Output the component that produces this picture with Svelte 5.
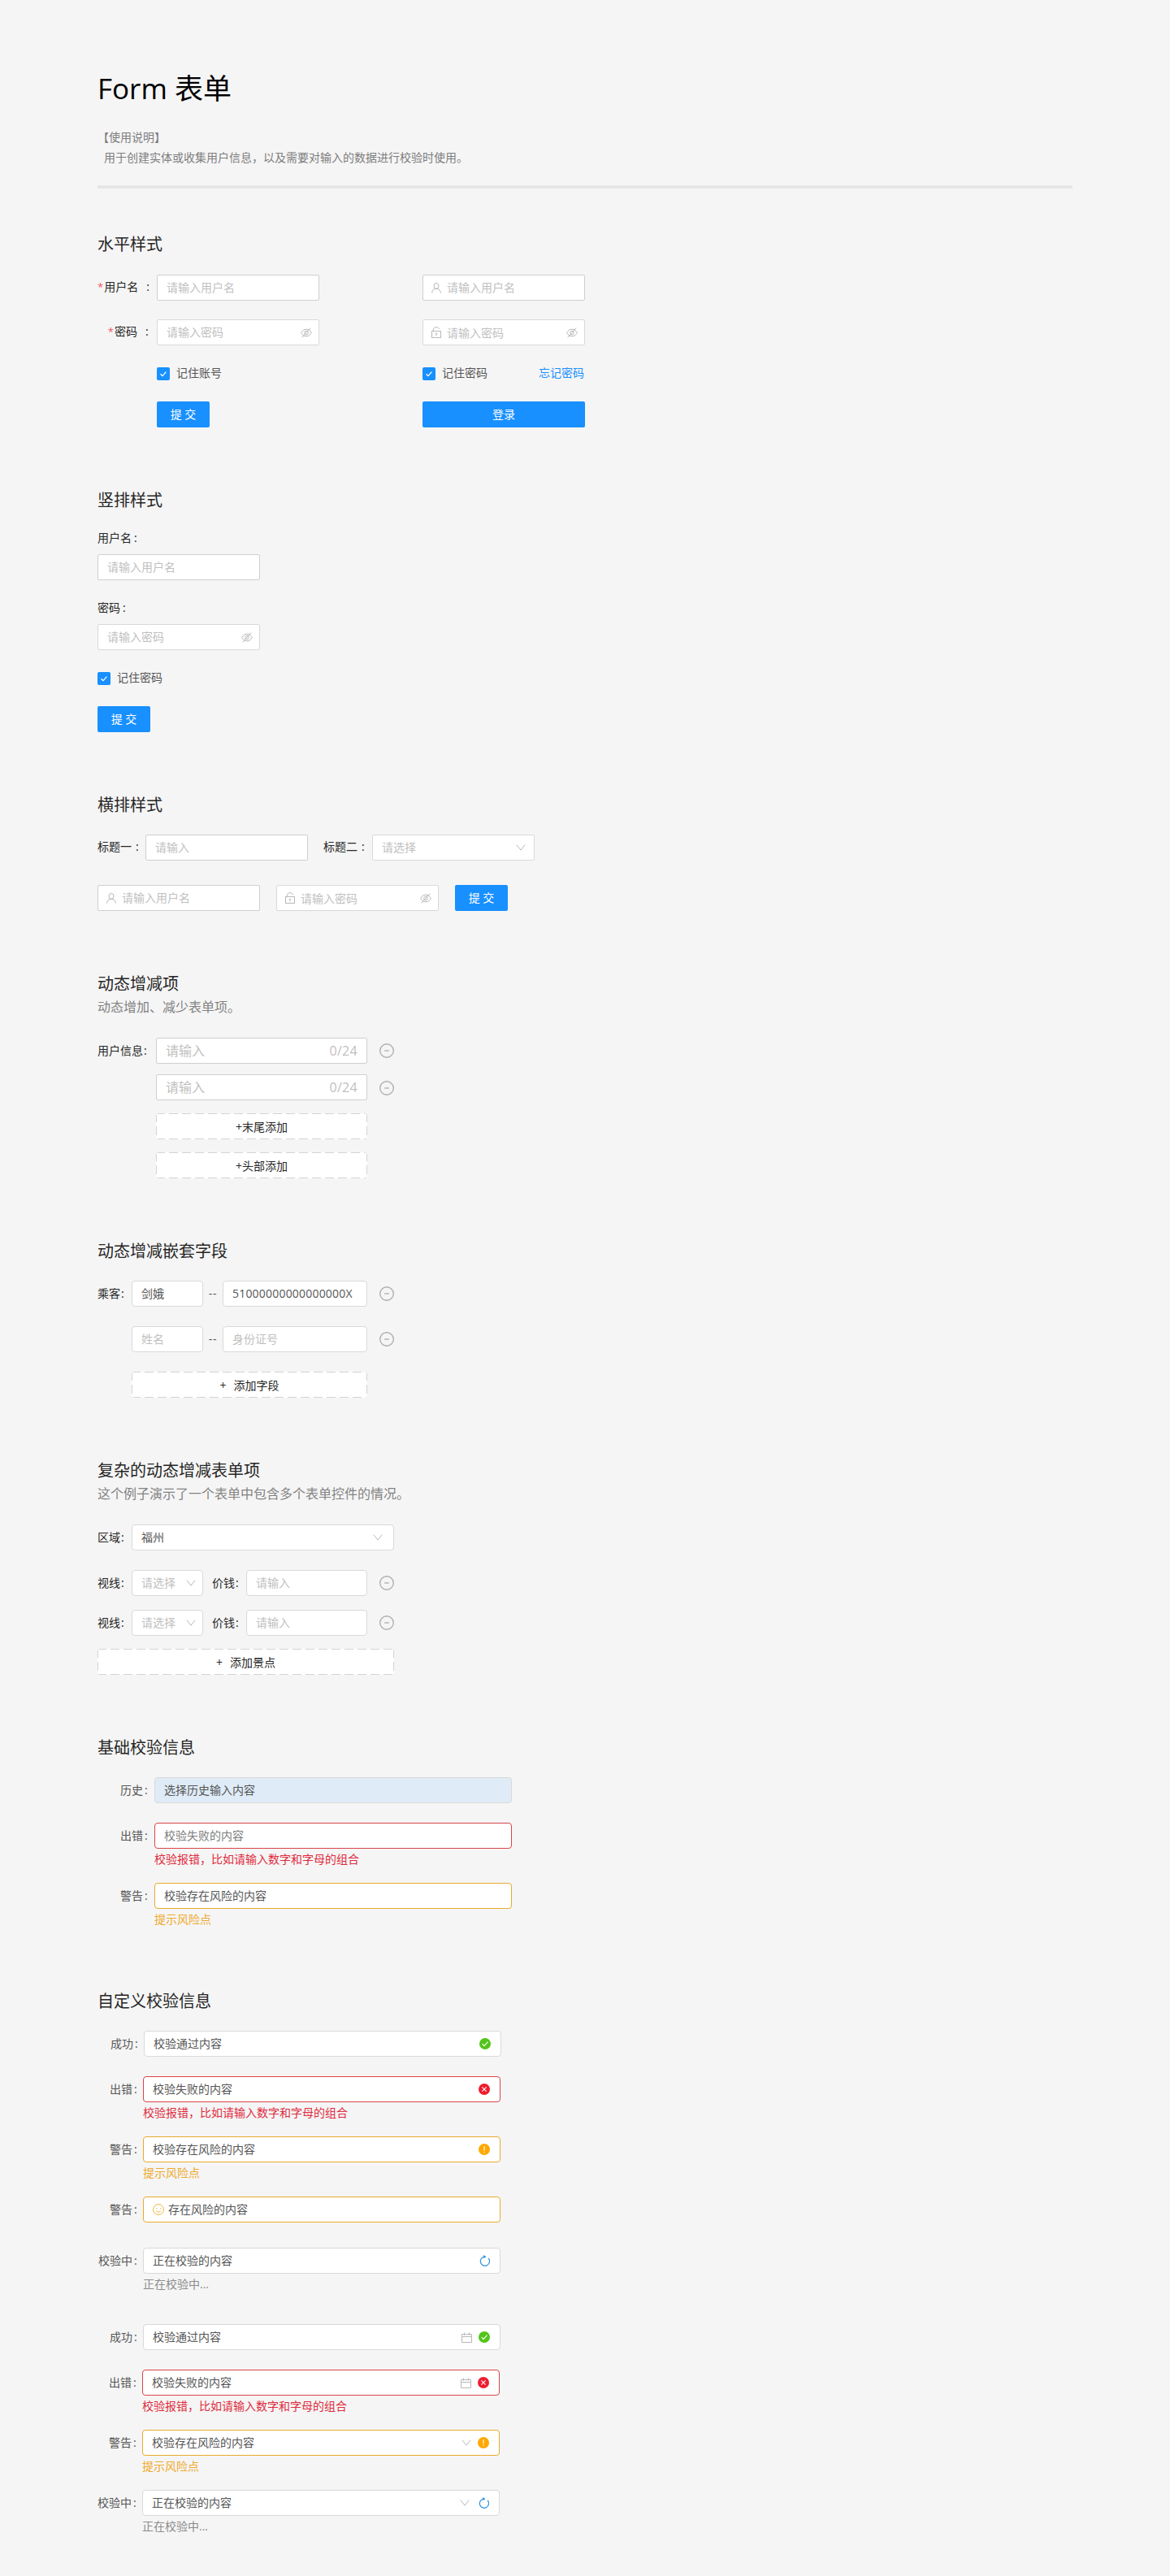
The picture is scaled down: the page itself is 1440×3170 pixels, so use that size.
<script>
  const basic = [
    { label: '历史', text: '选择历史输入内容', kind: 'history' },
    { label: '出错', text: '校验失败的内容', kind: 'error faded', help: '校验报错，比如请输入数字和字母的组合', tone: 'red' },
    { label: '警告', text: '校验存在风险的内容', kind: 'warning', help: '提示风险点', tone: 'gold' },
  ];
  const custom = [
    { label: '成功', text: '校验通过内容', kind: 'success', status: 'check', pos: 'first' },
    { label: '出错', text: '校验失败的内容', kind: 'error', status: 'close', help: '校验报错，比如请输入数字和字母的组合', tone: 'red' },
    { label: '警告', text: '校验存在风险的内容', kind: 'warning', status: 'exclaim', help: '提示风险点', tone: 'gold' },
    { label: '警告', text: '存在风险的内容', kind: 'warning', prefix: 'smile' },
    { label: '校验中', text: '正在校验的内容', kind: 'loading', status: 'reload', help: '正在校验中...', tone: 'grey', pos: 'apart' },
  ];
  const pickers = [
    { label: '成功', text: '校验通过内容', kind: 'success', extra: 'calendar', status: 'check', pos: 'first' },
    { label: '出错', text: '校验失败的内容', kind: 'error', extra: 'calendar', status: 'close', help: '校验报错，比如请输入数字和字母的组合', tone: 'red' },
    { label: '警告', text: '校验存在风险的内容', kind: 'warning', extra: 'down', status: 'exclaim', help: '提示风险点', tone: 'gold' },
    { label: '校验中', text: '正在校验的内容', kind: 'loading', extra: 'down', status: 'reload', help: '正在校验中...', tone: 'grey' },
  ];
</script>

{#snippet icon(name)}
  {#if name === 'user'}
    <svg class="icon" width="12" height="13" viewBox="0 0 12 13"><ellipse cx="6" cy="3.9" rx="3" ry="3.4" /><path d="M.6 12.6C.8 9.3 3 7.3 6 7.3s5.200 2 5.400 5.300" /></svg>
  {:else if name === 'lock'}
    <svg class="icon" width="12" height="14" viewBox="0 0 12 14"><rect x=".5" y="5.500" width="11" height="8" /><path d="M2.200 5.500V4C2.200 2 3.800.7 6 .7c1.800 0 3.200.9 3.700 2.300M4.800 8.500h2.400M6 8.500v2.800" /></svg>
  {:else if name === 'eye'}
    <svg class="icon" width="14" height="13" viewBox="0 0 14 13"><path d="M.7 6.500C2 3.700 4.200 2.200 7 2.200s5 1.500 6.300 4.300C12 9.300 9.800 10.800 7 10.800S2 9.300.7 6.500zM12.200.6 1.700 12.300" /><circle cx="7" cy="6.500" r="2.300" /></svg>
  {:else if name === 'down'}
    <svg class="icon" width="12" height="8" viewBox="0 0 12 8"><path d="M.9.7 6 7.100 11.100.7" /></svg>
  {:else if name === 'calendar'}
    <svg class="icon" width="13" height="13" viewBox="0 0 13 13"><path d="M.5 2.500h12v10H.5zM.5 5.500h12M3.500.5v3.200M9.500.5v3.200" /></svg>
  {:else if name === 'minus'}
    <svg class="minus" width="18" height="18" viewBox="0 0 18 18"><circle cx="9" cy="9" r="8.300" /><path d="M6.200 9h5.600" /></svg>
  {:else if name === 'check'}
    <svg class="badge green" width="14" height="14" viewBox="0 0 14 14"><circle cx="7" cy="7" r="7" /><path d="M3.600 7.200 6 9.600l4.500-5" /></svg>
  {:else if name === 'close'}
    <svg class="badge crimson" width="14" height="14" viewBox="0 0 14 14"><circle cx="7" cy="7" r="7" /><path d="m4.400 4.400 5.200 5.200M9.600 4.400 4.400 9.600" /></svg>
  {:else if name === 'exclaim'}
    <svg class="badge amber" width="14" height="14" viewBox="0 0 14 14"><circle cx="7" cy="7" r="7" /><path d="M7 3v5.600M7 9.800v1.200" /></svg>
  {:else if name === 'smile'}
    <svg class="smile" width="14" height="14" viewBox="0 0 14 14"><circle cx="7" cy="7" r="6.400" /><path d="M4.500 5v1.200M9.500 5v1.200M4.600 8.300c.3 1.200 1.200 1.900 2.400 1.900s2.100-.7 2.400-1.900" /></svg>
  {:else if name === 'reload'}
    <svg class="reload" width="13" height="14" viewBox="0 0 13 14"><path d="M11.200 4A5.600 5.600 0 1 1 6.200 2.100" /><path class="tip" d="M5.200 0 8.400 2.100 5.600 4.300z" /></svg>
  {/if}
{/snippet}

{#snippet field(text, size, pre, post)}
  <div class="input {size}">
    {#if pre}<span class="pre">{@render icon(pre)}</span>{/if}
    <span class="hint" class:low={pre === 'lock'}>{text}</span>
    {#if post}<span class="post {post}">{@render icon(post)}</span>{/if}
  </div>
{/snippet}

{#snippet checkbox(text)}
  <span class="tick"><svg width="16" height="16" viewBox="0 0 16 16"><path d="M4.500 8.200 7 10.600l4.400-5" /></svg></span>
  <span class="ticktext">{text}</span>
{/snippet}

{#snippet validated(row)}
  <div class="item {row.pos ?? ''} {row.help ? 'helped' : ''}">
    <span class="vlabel">{row.label}<b>:</b></span>
    <div class="vbody">
      <div class="input round {row.kind}">
        {#if row.prefix}<span class="face">{@render icon(row.prefix)}</span>{/if}
        <span class="val">{row.text}</span>
        <span class="tail">
          {#if row.extra}{@render icon(row.extra)}{/if}
          {#if row.status}{@render icon(row.status)}{/if}
        </span>
      </div>
      {#if row.help}<div class="help {row.tone}">{row.help}</div>{/if}
    </div>
  </div>
{/snippet}

<main>
  <h1><span>Form</span> 表单</h1>
  <div class="desc">
    <p>【使用说明】</p>
    <p class="indent">用于创建实体或收集用户信息，以及需要对输入的数据进行校验时使用。</p>
  </div>
  <hr />

  <section class="opening">
    <h2>水平样式</h2>
    <div class="twocol">
      <div class="login">
        <div class="row"><span class="rlabel"><em>*</em>用户名<b>:</b></span>{@render field('请输入用户名', 'w200 strong')}</div>
        <div class="row"><span class="rlabel"><em>*</em>密码<b>:</b></span>{@render field('请输入密码', 'w200', null, 'eye')}</div>
        <div class="row checks indented">{@render checkbox('记住账号')}</div>
        <div class="row indented"><button>提 交</button></div>
      </div>
      <div class="login">
        <div class="row">{@render field('请输入用户名', 'w200 strong', 'user')}</div>
        <div class="row">{@render field('请输入密码', 'w200', 'lock', 'eye')}</div>
        <div class="row checks">{@render checkbox('记住密码')}<span class="link">忘记密码</span></div>
        <div class="row"><button class="wide">登录</button></div>
      </div>
    </div>
  </section>

  <section>
    <h2>竖排样式</h2>
    <div class="vertical">
      <div class="toplabel">用户名<b>:</b></div>
      {@render field('请输入用户名', 'w200 strong')}
      <div class="toplabel second">密码<b>:</b></div>
      {@render field('请输入密码', 'w200', null, 'eye')}
      <div class="row remember">{@render checkbox('记住密码')}</div>
      <button>提 交</button>
    </div>
  </section>

  <section>
    <h2>横排样式</h2>
    <div class="row inline">
      <span class="ilabel">标题一<b>:</b></span>{@render field('请输入', 'w200 strong')}
      <span class="ilabel next">标题二<b>:</b></span>{@render field('请选择', 'w200', null, 'down')}
    </div>
    <div class="row spaced">
      {@render field('请输入用户名', 'w200 strong', 'user')}
      {@render field('请输入密码', 'w200', 'lock', 'eye')}
      <button>提 交</button>
    </div>
  </section>

  <section>
    <h2>动态增减项</h2>
    <p class="sub">动态增加、减少表单项。</p>
    <div class="stack dynamic">
      {#each [0, 1] as i}
        <div class="row">
          <span class="dlabel">{#if i === 0}用户信息<b>:</b>{/if}</span>
          <div class="input w260 strong"><span class="hint big">请输入</span><span class="count">0/24</span></div>
          <span class="remove low{i}">{@render icon('minus')}</span>
        </div>
      {/each}
      <div class="adders">
        <div class="add">+末尾添加</div>
        <div class="add">+头部添加</div>
      </div>
    </div>
  </section>

  <section>
    <h2>动态增减嵌套字段</h2>
    <div class="stack nested">
      <div class="row">
        <span class="slabel">乘客<b>:</b></span>
        <div class="input round w88"><span class="val">剑娥</span></div>
        <span class="dash">--</span>
        <div class="input round w178"><span class="val id">51000000000000000X</span></div>
        <span class="remove">{@render icon('minus')}</span>
      </div>
      <div class="row">
        <span class="slabel"></span>
        {@render field('姓名', 'round w88')}
        <span class="dash">--</span>
        {@render field('身份证号', 'round w178')}
        <span class="remove">{@render icon('minus')}</span>
      </div>
      <div class="add offset"><span class="plus">+</span>添加字段</div>
    </div>
  </section>

  <section>
    <h2>复杂的动态增减表单项</h2>
    <p class="sub">这个例子演示了一个表单中包含多个表单控件的情况。</p>
    <div class="complex">
      <div class="row area">
        <span class="slabel">区域<b>:</b></span>
        <div class="input round w323"><span class="val">福州</span><span class="post city">{@render icon('down')}</span></div>
      </div>
      {#each [0, 1] as i}
        <div class="row sight">
          <span class="slabel">视线<b>:</b></span>
          {@render field('请选择', 'round w88', null, 'down')}
          <span class="slabel price">价钱<b>:</b></span>
          {@render field('请输入', 'round w149')}
          <span class="remove">{@render icon('minus')}</span>
        </div>
      {/each}
      <div class="add full"><span class="plus">+</span>添加景点</div>
    </div>
  </section>

  <section class="basic">
    <h2>基础校验信息</h2>
    <div class="items">
      {#each basic as row}{@render validated(row)}{/each}
    </div>
  </section>

  <section class="custom">
    <h2>自定义校验信息</h2>
    <div class="items">
      {#each custom as row}{@render validated(row)}{/each}
    </div>
    <div class="items pickers">
      {#each pickers as row}{@render validated(row)}{/each}
    </div>
  </section>
</main>

<style>
  :global(body) {
    background: #f5f5f5;
  }
  main {
    box-sizing: border-box;
    width: 1440px;
    height: 3170px;
    padding: 85px 120px 0;
    font: 14px/20px 'Open Sans', 'Noto Sans CJK SC', sans-serif;
    color: #262626;
    overflow: hidden;
    white-space: nowrap;
  }
  h1, h2, p { margin: 0; font-weight: 400; }
  h1 {
    font-size: 35px;
    line-height: 48px;
    color: #000;
  }
  h2 {
    padding-top: 2px;
    font-size: 20px;
    line-height: 28px;
  }
  .desc {
    margin-top: 23px;
    line-height: 25px;
    color: #7d7d7d;
  }
  .indent { padding-left: 8px; }
  hr {
    height: 4px;
    margin: 22px 0 0;
    border: 0;
    background: #e6e6e6;
  }
  section { margin-top: 74px; }
  .opening { margin-top: 53px; }
  .row { display: flex; align-items: center; height: 32px; }
  b { font-weight: 400; }
  em { color: #f5515f; font-style: normal; font-size: 13px; margin-right: 1px; }

  .input {
    box-sizing: border-box;
    display: flex;
    align-items: center;
    height: 32px;
    flex: none;
    padding: 0 11px;
    border: 1px solid #d9d9d9;
    border-radius: 2px;
    background: #fff;
  }
  .strong { border-color: #cfcfcf; }
  .round { border-radius: 4px; }
  .w88 { width: 88px; }
  .w149 { width: 149px; }
  .w178 { width: 178px; }
  .w200 { width: 200px; }
  .w260 { width: 260px; }
  .w323 { width: 323px; }
  .hint { color: #bfbfbf; }
  .hint.big { font-size: 16px; }
  .low { padding-top: 2px; }
  .val { color: #555; }
  .id { letter-spacing: 0.2px; }
  .count { margin-left: auto; color: #bfbfbf; font-size: 16px; letter-spacing: 0.3px; }
  .pre { display: flex; width: 12px; margin: 0 7px 0 -1px; }
  .post { display: flex; margin-left: auto; margin-right: -3px; }
  .post.down { margin-right: -1px; }
  .post.city { margin-right: 2px; }
  .w88 .post.down { margin-right: -3px; }

  .icon { fill: none; stroke: #b8b8b8; stroke-width: 1; display: block; }
  .minus { fill: none; stroke: #b0b0b0; stroke-width: 1.400; display: block; }
  .badge { display: block; fill: none; stroke: #fff; stroke-width: 1.100; }
  .green circle { fill: #52c41a; stroke: none; }
  .crimson circle { fill: #ee1d2e; stroke: none; }
  .amber circle { fill: #ffa800; stroke: none; }
  .smile { display: block; fill: none; stroke: #f0b43c; stroke-width: 1; }
  .reload { display: block; fill: none; stroke: #2a90e0; stroke-width: 1.200; }
  .reload .tip { fill: #2a90e0; stroke: none; }

  button {
    display: block;
    width: 65px;
    height: 32px;
    padding: 0;
    border: 0;
    border-radius: 2px;
    background: #1890ff;
    color: #fff;
    font: inherit;
  }
  .wide { width: 200px; }

  .twocol { display: flex; gap: 127px; margin-top: 23px; }
  .login { display: flex; flex-direction: column; gap: 23px; }
  .login .checks { margin: -4px 0 -5px; }
  .rlabel { width: 73px; display: flex; justify-content: flex-end; align-items: center; height: 30px; margin-bottom: 2px; }
  .rlabel b { width: 24px; padding-left: 10px; box-sizing: border-box; }
  .indented { padding-left: 73px; }
  .tick { width: 16px; height: 16px; border-radius: 2px; background: #1890ff; }
  .tick svg { display: block; fill: none; stroke: #fff; stroke-width: 1.300; }
  .ticktext { margin: 0 0 2px 8px; color: #555; }
  .link { margin: 0 1px 2px auto; color: #1890ff; }

  .vertical { margin-top: 22px; }
  .toplabel { margin-bottom: 10px; }
  .toplabel b { margin-left: 3px; }
  .second { margin: 24px 0 10px; }
  .remember { height: 16px; margin: 27px 0 26px; }

  .inline { margin-top: 22px; }
  .ilabel { width: 59px; margin-bottom: 2px; }
  .ilabel b { margin-left: 5px; }
  .next { margin-left: 19px; width: 60px; }
  .spaced { margin-top: 30px; gap: 20px; }

  .sub { margin-top: 4px; padding-bottom: 1px; font-size: 16px; color: #828282; }
  .stack { display: flex; flex-direction: column; }
  .dynamic { margin-top: 27px; gap: 13px; }
  .dlabel { width: 72px; }
  .dlabel b, .slabel b { margin-left: 1px; }
  .remove { margin-left: 15px; }
  .low1 { padding-top: 2px; }
  .adders { display: flex; flex-direction: column; gap: 16px; margin: 3px 0 0 72px; }
  /* Long dashes on every side: 11px of line, 5px of gap */
  .add {
    --dash: #d4d4d4 0 11px, transparent 11px 16px;
    width: 260px;
    height: 32px;
    border-radius: 4px;
    background:
      repeating-linear-gradient(90deg, var(--dash)) 0 0 / 100% 1px no-repeat,
      repeating-linear-gradient(90deg, var(--dash)) 0 100% / 100% 1px no-repeat,
      repeating-linear-gradient(180deg, var(--dash)) 0 0 / 1px 100% no-repeat,
      repeating-linear-gradient(180deg, var(--dash)) 100% 0 / 1px 100% no-repeat,
      #fff;
    text-align: center;
    line-height: 33px;
  }
  .plus { margin-right: 9px; }
  .nested { margin-top: 22px; gap: 24px; }
  .slabel { width: 42px; }
  .dash { width: 24px; text-align: center; color: #555; letter-spacing: 0.7px; }
  .offset { width: 290px; margin-left: 42px; }
  .complex { margin-top: 27px; }
  .area { margin-bottom: 24px; }
  .sight { margin-bottom: 17px; }
  .price { margin-left: 11px; }
  .full { width: 365px; margin-top: -1px; }

  .items { display: flex; flex-direction: column; gap: 24px; margin-top: 22px; }
  .item { display: flex; height: 32px; }
  .helped { height: 50px; }
  .vlabel { width: 56px; display: flex; justify-content: flex-end; line-height: 32px; color: #555; flex: none; }
  .vlabel b { box-sizing: border-box; width: 13px; padding-left: 2px; }
  .vbody { width: 440px; }
  .vbody .input { padding-right: 12px; }
  .basic .vlabel { width: 70px; }
  .basic .vlabel b { width: 14px; }
  .basic .items { margin-bottom: 80px; }
  .custom { margin-top: 0; }
  .help { line-height: 26px; }
  .red { color: #e02a3c; }
  .gold { color: #efa92d; }
  .grey { color: #8c8c8c; }
  .history { background: #dfebf7; }
  .error { border-color: #d9444a; }
  .warning { border-color: #e8ab2d; }
  .faded .val { color: #7d7d7d; }
  .first { margin-left: 1px; }
  .apart { margin-top: 7px; }
  .face { margin-right: 5px; }
  .tail { display: flex; align-items: center; gap: 8px; margin-left: auto; }
  .loading .tail { gap: 11px; }
  .pickers { margin: 44px 0 0 -1px; }
</style>
